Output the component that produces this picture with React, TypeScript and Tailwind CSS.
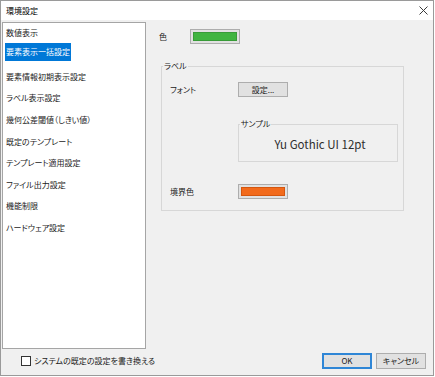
const jp = "font-['Noto_Sans_CJK_JP',sans-serif] [font-feature-settings:'palt']";

const items = [
  '数値表示',
  '要素表示一括設定',
  '要素情報初期表示設定',
  'ラベル表示設定',
  '幾何公差閾値（しきい値）',
  '既定のテンプレート',
  'テンプレート適用設定',
  'ファイル出力設定',
  '機能制限',
  'ハードウェア設定',
];

function Swatch({ color }: { color: string }) {
  return (
    <div className="h-[15px] w-[50px] border border-[#adadad] bg-[#e1e1e1] p-[2px]">
      <div className={`h-full w-full border ${color}`} />
    </div>
  );
}

function GroupBox({ label, className, children }: { label: string; className: string; children?: React.ReactNode }) {
  return (
    <div className={`relative border border-[#d7d7d7] ${className}`}>
      <span className="absolute -top-[7px] left-[1px] bg-[#f0f0f0] px-[1px] text-[8px] leading-[12px] text-[#1a1a1a]">
        {label}
      </span>
      {children}
    </div>
  );
}

export default function App() {
  return (
    <div className={`h-[377px] w-[435px] bg-white ${jp}`}>
      <div className="flex h-[376px] w-[434px] flex-col border border-[#9a9a9a]">
        {/* title bar */}
        <div className="flex h-[19px] items-center justify-between bg-white pl-[5px] pr-[5px] pt-[1px]">
          <span className="text-[8px] leading-none text-black">環境設定</span>
          <svg width="9" height="9" viewBox="0 0 9 9" className="-mt-[1px]">
            <path d="M0.5 0.5 L8.5 8.5 M8.5 0.5 L0.5 8.5" stroke="#3a3a3a" strokeWidth="1" />
          </svg>
        </div>

        <div className="flex flex-1 flex-col bg-[#f0f0f0]">
          <div className="flex">
            {/* list */}
            <div className="ml-[1px] mt-[2px] h-[327px] w-[144px] border border-[#a5a5a5] bg-white text-[8px] leading-none text-[#1a1a1a]">
              {items.map((item, i) => {
                if (i === 0) {
                  return (
                    <div key={item} className="flex h-[20px] items-center pl-[3px]">
                      {item}
                    </div>
                  );
                }
                if (i === 1) {
                  return (
                    <div key={item} className="flex h-[23px] items-start pl-[2px]">
                      <span className="flex h-[18px] items-center bg-[#0078d7] px-[1px] text-white">{item}</span>
                    </div>
                  );
                }
                return (
                  <div key={item} className="flex h-[21.6px] items-center pl-[3px]">
                    {item}
                  </div>
                );
              })}
            </div>

            {/* settings panel */}
            <div className="flex flex-col pl-[13px] pt-[9px] text-[8px] leading-none text-[#1a1a1a]">
              <div className="flex items-center">
                <span className="w-[31px]">色</span>
                <Swatch color="border-[#379b37] bg-[#3fb43f]" />
              </div>

              <GroupBox label="ラベル" className="ml-[2px] mt-[22px] h-[145px] w-[243px] pl-[8px] pt-[15px]">
                <div className="flex items-center">
                  <span className="w-[68px]">フォント</span>
                  <div className="flex h-[15px] w-[50px] items-center justify-center border border-[#adadad] bg-[#e1e1e1]">
                    設定...
                  </div>
                </div>
                <div className="mt-[27px] flex">
                  <span className="w-[68px]" />
                  <GroupBox label="サンプル" className="flex h-[38px] w-[160px] items-center justify-center pl-[4px] pt-[4px]">
                    <span className="font-['Noto_Sans_CJK_JP',sans-serif] text-[11.5px] leading-none text-[#2e2e2e]">
                      Yu Gothic UI 12pt
                    </span>
                  </GroupBox>
                </div>
                <div className="mt-[22px] flex items-center">
                  <span className="w-[68px]">境界色</span>
                  <Swatch color="border-[#d4560f] bg-[#f26a1b]" />
                </div>
              </GroupBox>
            </div>
          </div>

          {/* bottom row */}
          <div className="flex justify-between pl-[20px] pr-[7px] pt-[4px] text-[8px] leading-none text-[#1a1a1a]">
            <label className="flex h-[16px] items-center gap-[3px]">
              <span className="h-[10px] w-[10px] border border-[#333333] bg-white" />
              <span>システムの既定の設定を書き換える</span>
            </label>
            <div className="flex gap-[4px]">
              <div className="flex h-[16px] w-[50px] items-center justify-center border-2 border-[#2f86d6] bg-[#e1e1e1]">
                OK
              </div>
              <div className="flex h-[16px] w-[50px] items-center justify-center border border-[#adadad] bg-[#e1e1e1]">
                キャンセル
              </div>
            </div>
          </div>
        </div>
      </div>
    </div>
  );
}
